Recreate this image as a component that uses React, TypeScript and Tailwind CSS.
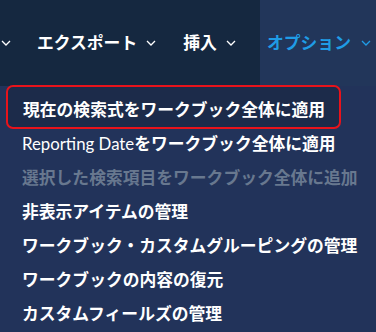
import React from 'react';

const Chevron: React.FC<{ className?: string }> = ({ className }) => (
  <svg width="10" height="6" viewBox="0 0 10 6" className={className} fill="none">
    <path d="M1 1l4 4 4-4" stroke="currentColor" strokeWidth="1.3" />
  </svg>
);

const items: { label: React.ReactNode; active?: boolean; disabled?: boolean }[] = [
  { label: '現在の検索式をワークブック全体に適用', active: true },
  {
    label: (
      <>
        <span className="font-normal">Reporting Date</span>をワークブック全体に適用
      </>
    ),
  },
  { label: '選択した検索項目をワークブック全体に追加', disabled: true },
  { label: '非表示アイテムの管理' },
  { label: 'ワークブック・カスタムグルーピングの管理' },
  { label: 'ワークブックの内容の復元' },
  { label: 'カスタムフィールズの管理' },
];

const App: React.FC = () => {
  return (
    <div
      className="w-[376px] h-[332px] overflow-hidden bg-[#22335a]"
      style={{ fontFamily: 'Lato, "Noto Sans CJK JP", sans-serif' }}
    >
      {/* top menu bar */}
      <div className="flex h-[86px] bg-[#152840] text-white font-bold text-[16.8px]">
        <div className="flex items-center pl-[1px] w-[260px]">
          <Chevron className="text-white" />
          <span className="ml-[26px]">エクスポート</span>
          <Chevron className="ml-[9px] text-white" />
          <span className="ml-[27px]">挿入</span>
          <Chevron className="ml-[9px] text-white" />
        </div>
        <div className="flex items-center flex-1 bg-[#22365a] pl-[7px] text-[#1f9ce6]">
          <span>オプション</span>
          <Chevron className="ml-[10px]" />
        </div>
      </div>

      {/* dropdown */}
      <div className="relative -mt-[1px] px-[6px] flex flex-col">
        {items.map((it, i) => (
          <div
            key={i}
            className={
              it.active
                ? 'h-[44px] w-[335px] mb-[-2px] flex items-center pt-[6px] pl-[15px] rounded-[7px] border-2 border-[#e8131b] bg-[#1c2b4a] text-white font-bold text-[16.8px] whitespace-nowrap'
                : it.disabled
                ? 'h-[34px] flex items-center pl-[16px] text-[#68788f] font-bold text-[16.8px] whitespace-nowrap'
                : 'h-[34px] flex items-center pl-[16px] text-white font-bold text-[16.8px] whitespace-nowrap'
            }
          >
            {it.label}
          </div>
        ))}
      </div>
    </div>
  );
};

export default App;
